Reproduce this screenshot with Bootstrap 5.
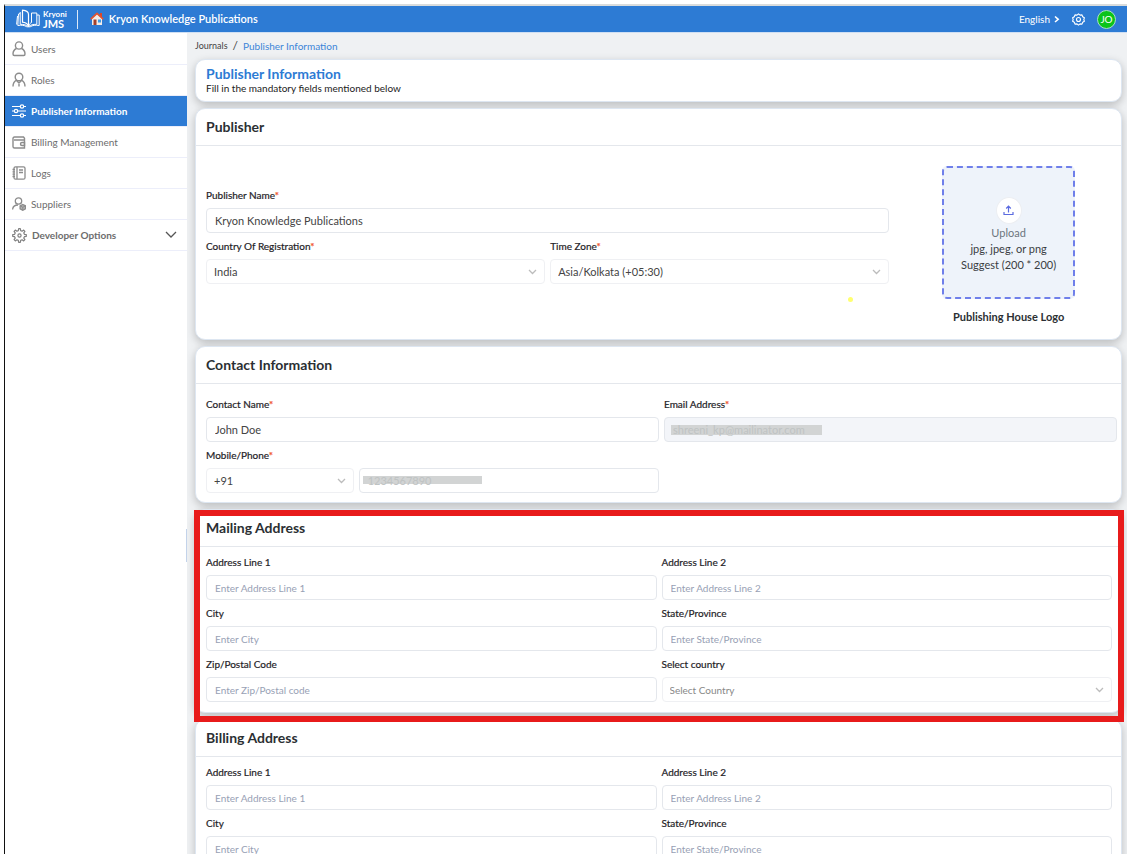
<!DOCTYPE html>
<html lang="en">
<head>
<meta charset="utf-8">
<meta name="viewport" content="width=device-width, initial-scale=1">
<title>Publisher Information</title>
<link href="https://cdn.jsdelivr.net/npm/bootstrap@5.3.0/dist/css/bootstrap.min.css" rel="stylesheet">
<style>
  :root { --brand: #2d7bd4; --line: #e4e7ec; --ink: #2b2f33; }
  body { font-family: Lato, "Liberation Sans", sans-serif; font-size: 10px; line-height: 16px; color: var(--ink); background: #fff; padding: 4px 0 7px 4px; }
  .app-shell { border-left: 1px solid #111; border-top: 2px solid #d9dcdc; min-height: 0; }
  .top-bar { background: var(--brand); color: #fff; height: 27px; padding: 0 11px; border-bottom: 1px solid #cfdff3; }
  .top-bar a, .bar-btn { color: #fff; text-decoration: none; background: none; border: 0; padding: 0; }
  .brand-link { gap: 2px; }
  .logo-text { font-size: 11px; line-height: 10px; font-weight: 700; }
  .logo-text small { font-size: 8px; line-height: 9px; display: block; }
  .logo-rule { width: 1px; height: 19px; background: #dbe8f8; margin: 0 12px 0 10px; }
  .org-link { gap: 5px; font-size: 11px; font-weight: 600; }
  .user-dot { width: 19px; height: 19px; background: #0bc41a; color: #fff; border: 1px solid #a9dfc4; font-size: 10px; line-height: 16px; padding: 0; }
  .side-nav { width: 182px; background: #fff; padding-top: 1px; }
  .side-nav a { height: 31px; padding: 0 10px 0 7px; gap: 5px; color: #6d6d6d; text-decoration: none; border-bottom: 1px solid #eceefa; }
  .side-nav a.active { background: var(--brand); color: #fff; font-weight: 700; }
  .side-nav svg { flex: none; }
  .side-handle { position: absolute; right: 0; top: 496px; width: 1px; height: 33px; background: #c3d3ea; }
  .page-area { background: #eff1f3; padding: 4px 5px 0 8px; overflow: hidden; min-width: 0; }
  .crumbs { --bs-breadcrumb-divider: "/"; margin: 0 0 6px; font-size: 10px; height: 16px; }
  .crumbs .breadcrumb-item + .breadcrumb-item { padding-left: 5px; }
  .crumbs .breadcrumb-item + .breadcrumb-item::before { padding-right: 5px; color: #444; font-size: 12px; }
  .crumbs a { color: #444; text-decoration: none; font-size: 9px; }
  .crumbs .active { color: #3c85d8; }
  .panel { background: #fff; border: 1px solid #dde6f1; border-radius: 10px; margin-bottom: 6px; box-shadow: 0 3px 8px rgba(0,0,0,.22); position: relative; }
  .panel h2 { font-size: 14px; line-height: 18px; font-weight: 700; margin: 0; padding: 9px 10px; border-bottom: 1px solid var(--line); height: 37px; }
  .intro { padding: 5px 10px; height: 43px; }
  .intro h1 { font-size: 14px; line-height: 17px; font-weight: 700; color: var(--brand); margin: 0; }
  .intro p { margin: 0; font-size: 10px; line-height: 13px; color: #222; }
  .fields { padding: 7px 9px 5px 10px; }
  .contact-fields { padding: 12px 4px 4px 10px; }
  .gut { --bs-gutter-x: 5px; --bs-gutter-y: 0; }
  .form-label { display: block; font-size: 10px; line-height: 16px; margin: 0 0 5px; color: #1f2327; -webkit-text-stroke: 0.2px; }
  .form-label b { color: #f0532d; font-weight: 400; }
  .form-control, .form-select { height: 25px; min-height: 0; font-size: 11px; line-height: 16px; padding: 0 8px; border: 1px solid var(--line); border-radius: 4px; color: #444; margin-bottom: 5px; }
  .form-select { padding: 0 24px 0 7px; border-color: #eff0f3; background-position: right 7px center; background-size: 9px 9px;
    background-image: url("data:image/svg+xml,%3csvg xmlns='http://www.w3.org/2000/svg' viewBox='0 0 9 9'%3e%3cpath fill='none' stroke='%23bcbcbc' stroke-width='1.3' d='M1 3l3.500 3.500L8 3'/%3e%3c/svg%3e"); }
  .form-control::placeholder { color: #98a1b5; font-size: 10px; }
  .form-select.unset { color: #888; font-size: 10px; }
  .masked { color: #bfc3c3; background: linear-gradient(#d2d4d4, #d2d4d4) no-repeat 6px 7px / 151px 10px; }
  .masked-phone { background-position: 3px 7px; background-size: 119px 8px; }
  .masked-mail, .masked-mail:disabled { background-color: #f3f5f9; }
  .pub-fields { padding: 20px 0 14px 10px; }
  .pub-form { padding: 21px 3px 0 0; }
  .pub-logo { padding-left: 4px; }
  .drop-zone { width: 133px; height: 133px; background: #eef3fa; border: 2px dashed #6f7fea; border-radius: 5px; font-size: 11px; line-height: 16px; color: #3a3d42; cursor: pointer; padding: 5px 0 0; }
  .drop-zone .up-icon { width: 26px; height: 27px; background: #fff; border: 1px solid #eceef2; border-radius: 50%; margin-bottom: 1px; }
  .zone-name { font-size: 11px; line-height: 16px; margin: 10px 0 0; font-weight: 700; }
  .highlight { position: absolute; inset: 0 -3px -10px -2px; border: 6px solid #e81b1b; z-index: 2; pointer-events: none; }
  .click-spot { position: absolute; right: 268px; top: 188px; width: 5px; height: 5px; border-radius: 50%; background: #ffff70; }
</style>
</head>
<body class="vh-100 overflow-hidden">
<div class="app-shell h-100 d-flex flex-column overflow-hidden">
  <header class="top-bar d-flex align-items-center flex-shrink-0">
    <a href="#" class="brand-link d-flex align-items-center">
      <svg width="25" height="20" viewBox="0 0 25 20" fill="none" stroke="#fff" stroke-width="1" stroke-linejoin="round"><path stroke-width="1.200" d="M6.500 1.200c3.500.3 6 1.800 6 4.300v11.500c-1-2-3-3.500-6-3.800z"/><path d="M4.200 3v12.300c3.500 0 6.300.7 8.300 2.200 2-1.500 4.500-2.200 8.300-2.200V4h-5.300v9.500c-1.500.8-2.500 2-3 3.500M4.200 4.500L2.500 5 1.800 16.500c4-.6 6.500-.3 9 1.300h3.400c2.500-1.600 5-1.900 9-1.300V6h-2.200M1.500 7l-.9 8.500"/></svg>
      <span class="logo-text"><small>Kryoni</small>JMS</span>
    </a>
    <span class="logo-rule"></span>
    <a href="#" class="org-link d-flex align-items-center">
      <svg width="14" height="14" viewBox="0 0 14 14"><path fill="#f2ece8" d="M2 6.500L7 2l5 4.500V13H2z"/><path fill="#d9472b" d="M10 1h2v4h-2z"/><path fill="none" stroke="#e2532f" stroke-width="1.800" stroke-linejoin="round" d="M.8 7.200L7 1.400l6.200 5.800"/><path fill="#a3402b" d="M3.500 7.500h3V13h-3z"/><path fill="#3f9be6" d="M8 7.500h3v3H8z"/></svg>
      Kryon Knowledge Publications
    </a>
    <div class="ms-auto d-flex align-items-center">
      <button type="button" class="bar-btn d-flex align-items-center gap-1">English
        <svg width="6" height="8" viewBox="0 0 6 8" fill="none" stroke="#fff" stroke-width="1.600"><path d="M1 1.500L4.200 4.300 1 7"/></svg></button>
      <button type="button" class="bar-btn d-flex ms-2 me-2 px-1" aria-label="Settings">
        <svg width="13" height="13" viewBox="0 0 13 13" fill="none" stroke="#fff" stroke-width="1.100" stroke-linejoin="round"><path d="M6.500.8l1.500 1.300 2-.2.700 1.900 1.700 1-.6 1.700.6 1.700-1.700 1-.7 1.900-2-.2-1.500 1.300L5 10.900l-2 .2-.7-1.900-1.700-1 .6-1.700-.6-1.700 1.700-1L3 1.900l2 .2z"/><circle cx="6.500" cy="6.500" r="2"/></svg></button>
      <button type="button" class="user-dot rounded-circle">JO</button>
    </div>
  </header>

  <div class="d-flex flex-grow-1 overflow-hidden">
    <nav class="side-nav flex-shrink-0 position-relative">
      <a href="#" class="d-flex align-items-center"><svg width="14" height="16" viewBox="0 0 14 16" fill="none" stroke="#8c8c8c" stroke-width="1.400" stroke-linejoin="round"><circle cx="7" cy="4.500" r="3.600"/><path d="M4.500 7.500C2.300 8.500 1 10.500 1 13c0 1 .4 1.500 1.300 1.500h9.400c.9 0 1.300-.5 1.300-1.500 0-2.500-1.300-4.500-3.500-5.500"/></svg>Users</a>
      <a href="#" class="d-flex align-items-center"><svg width="14" height="16" viewBox="0 0 14 16" fill="none" stroke="#8c8c8c" stroke-width="1.400"><circle cx="7" cy="5" r="3.800"/><path d="M4.500 8.200C2.300 9.300 1 11.500 1 14.500M9.500 8.200c2.200 1.100 3.500 3.300 3.500 6.300M4.500 8.500L7 11l2.500-2.500M7 10.500v4"/></svg>Roles</a>
      <a href="#" class="d-flex align-items-center active"><svg width="14" height="14" viewBox="0 0 14 14" fill="none" stroke="#fff" stroke-width="1.200"><path d="M0 2.500h8M12 2.500h2M0 7h2M6 7h8M0 11.500h8M12 11.500h2"/><circle cx="10" cy="2.500" r="1.700"/><circle cx="4" cy="7" r="1.700"/><circle cx="10" cy="11.500" r="1.700"/></svg>Publisher Information</a>
      <a href="#" class="d-flex align-items-center"><svg width="14" height="13" viewBox="0 0 14 13" fill="none" stroke="#8c8c8c" stroke-width="1.400"><path d="M12.500 4V2.300L11.500 1h-9C1.500 1 1 1.500 1 2.500v8c0 1 .5 1.500 1.500 1.500h10V4H2"/><path d="M12.500 6.500H10a1.500 1.500 0 000 3h2.500z"/></svg>Billing Management</a>
      <a href="#" class="d-flex align-items-center"><svg width="14" height="14" viewBox="0 0 14 14" fill="none" stroke="#8c8c8c" stroke-width="1.300"><rect x="2" y=".8" width="11" height="12.400" rx="1.500"/><path d="M5 1v12M7 4h4M7 6.500h4M.5 3.500h2.500M.5 5.800h2.500M.5 8.200h2.500M.5 10.500h2.500"/></svg>Logs</a>
      <a href="#" class="d-flex align-items-center"><svg width="14" height="14" viewBox="0 0 14 14" fill="none" stroke="#8c8c8c" stroke-width="1.300"><circle cx="6.500" cy="4" r="3.200"/><path d="M.6 12.500C.8 9.500 3 8 6 8"/><path fill="#b5b5b5" d="M10.800 7.500l2.700 1.300v3l-2.700 1.500-2.700-1.500v-3z"/><path stroke-width="1" d="M8.200 9l2.600 1.200L13.400 9M10.800 10v3"/></svg>Suppliers</a>
      <a href="#" class="d-flex align-items-center fw-bold"><svg width="15" height="15" viewBox="0 0 15 15" fill="none" stroke="#808080" stroke-width="1.200" stroke-linejoin="round"><path d="M6.300 2.600L6.700.7h1.600l.4 1.900 1.400.6 1.600-1.100 1.200 1.200-1.100 1.600.6 1.400 1.900.4v1.600l-1.900.4-.6 1.400 1.100 1.600-1.200 1.200-1.600-1.100-1.400.6-.4 1.900H6.700l-.4-1.900-1.400-.6-1.600 1.100-1.200-1.200 1.100-1.600-.6-1.400L.7 8.300V6.700l1.900-.4.6-1.400-1.100-1.600 1.200-1.200 1.600 1.100z"/><circle cx="7.500" cy="7.500" r="1.600"/></svg>Developer Options
        <svg class="ms-auto" width="12" height="8" viewBox="0 0 12 8" fill="none" stroke="#555" stroke-width="1.300"><path d="M1 1l5 5 5-5"/></svg></a>
      <span class="side-handle"></span>
    </nav>

    <main class="page-area flex-grow-1">
      <ol class="breadcrumb crumbs align-items-center">
        <li class="breadcrumb-item"><a href="#">Journals</a></li>
        <li class="breadcrumb-item active" aria-current="page">Publisher Information</li>
      </ol>

      <section class="panel intro">
        <h1>Publisher Information</h1>
        <p>Fill in the mandatory fields mentioned below</p>
      </section>

      <section class="panel">
        <h2>Publisher</h2>
        <div class="pub-fields">
          <div class="row g-0">
            <div class="col-9 pub-form">
              <label class="form-label" for="pubName">Publisher Name<b>*</b></label>
              <input class="form-control" id="pubName" value="Kryon Knowledge Publications">
              <div class="row gut">
                <div class="col-6">
                  <label class="form-label" for="regCountry">Country Of Registration<b>*</b></label>
                  <select class="form-select" id="regCountry"><option>India</option></select>
                </div>
                <div class="col-6">
                  <label class="form-label" for="zone">Time Zone<b>*</b></label>
                  <select class="form-select" id="zone"><option>Asia/Kolkata (+05:30)</option></select>
                </div>
              </div>
            </div>
            <div class="col-3 pub-logo d-flex flex-column align-items-center">
              <button type="button" class="drop-zone d-flex flex-column align-items-center justify-content-center">
                <span class="up-icon d-flex align-items-center justify-content-center"><svg width="11" height="11" viewBox="0 0 11 11" fill="none" stroke="#5b6be0" stroke-width="1.200"><path d="M5.500 7.500V1.500M3.200 3.500l2.300-2.300 2.300 2.300M1 7v2.500h9V7"/></svg></span>
                <span class="text-secondary">Upload</span>
                <span>jpg, jpeg, or png</span>
                <span>Suggest (200 * 200)</span>
              </button>
              <p class="zone-name">Publishing House Logo</p>
            </div>
          </div>
        </div>
        <span class="click-spot"></span>
      </section>

      <section class="panel">
        <h2>Contact Information</h2>
        <div class="contact-fields">
          <div class="row gut">
            <div class="col-6">
              <label class="form-label" for="cName">Contact Name<b>*</b></label>
              <input class="form-control" id="cName" value="John Doe">
            </div>
            <div class="col-6">
              <label class="form-label" for="cMail">Email Address<b>*</b></label>
              <input class="form-control masked masked-mail" id="cMail" value="shreeni_kp@mailinator.com" disabled>
            </div>
            <div class="col-6">
              <label class="form-label" for="cPhone">Mobile/Phone<b>*</b></label>
              <div class="row gut">
                <div class="col-4"><select class="form-select" aria-label="Dialling code"><option>+91</option></select></div>
                <div class="col-8"><input class="form-control masked masked-phone" id="cPhone" value="1234567890"></div>
              </div>
            </div>
          </div>
        </div>
      </section>

      <section class="panel">
        <h2>Mailing Address</h2>
        <div class="fields">
          <div class="row gut">
            <div class="col-6"><label class="form-label" for="m1">Address Line 1</label><input class="form-control" id="m1" placeholder="Enter Address Line 1"></div>
            <div class="col-6"><label class="form-label" for="m2">Address Line 2</label><input class="form-control" id="m2" placeholder="Enter Address Line 2"></div>
            <div class="col-6"><label class="form-label" for="mCity">City</label><input class="form-control" id="mCity" placeholder="Enter City"></div>
            <div class="col-6"><label class="form-label" for="mState">State/Province</label><input class="form-control" id="mState" placeholder="Enter State/Province"></div>
            <div class="col-6"><label class="form-label" for="mZip">Zip/Postal Code</label><input class="form-control" id="mZip" placeholder="Enter Zip/Postal code"></div>
            <div class="col-6"><label class="form-label" for="mCountry">Select country</label><select class="form-select unset" id="mCountry"><option>Select Country</option></select></div>
          </div>
        </div>
        <span class="highlight"></span>
      </section>

      <section class="panel">
        <h2>Billing Address</h2>
        <div class="fields">
          <div class="row gut">
            <div class="col-6"><label class="form-label" for="b1">Address Line 1</label><input class="form-control" id="b1" placeholder="Enter Address Line 1"></div>
            <div class="col-6"><label class="form-label" for="b2">Address Line 2</label><input class="form-control" id="b2" placeholder="Enter Address Line 2"></div>
            <div class="col-6"><label class="form-label" for="bCity">City</label><input class="form-control" id="bCity" placeholder="Enter City"></div>
            <div class="col-6"><label class="form-label" for="bState">State/Province</label><input class="form-control" id="bState" placeholder="Enter State/Province"></div>
          </div>
        </div>
      </section>
    </main>
  </div>
</div>
<script src="https://cdn.jsdelivr.net/npm/bootstrap@5.3.0/dist/js/bootstrap.bundle.min.js"></script>
</body>
</html>
